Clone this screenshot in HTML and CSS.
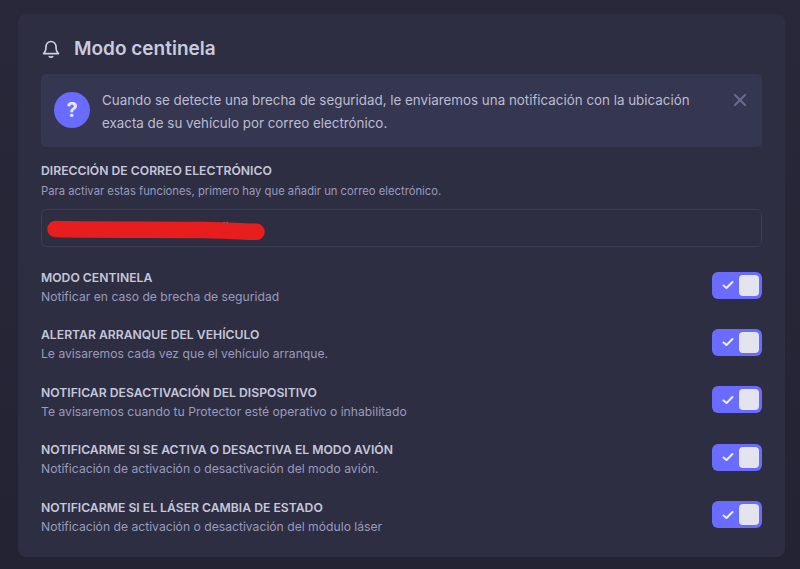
FILE: index.html
```html
<!DOCTYPE html>
<html lang="es">
<head>
<meta charset="utf-8">
<title>Modo centinela</title>
<link rel="stylesheet" href="styles.css">
</head>
<body>
<main class="card">
  <header class="head">
    <svg class="bell" width="20" height="20" viewBox="0 0 24 24" fill="none" stroke="currentColor" stroke-width="2" stroke-linecap="round" stroke-linejoin="round"><path d="M6 9a6 6 0 0 1 12 0c0 5 1.200 7 3 8.500H3C4.800 16 6 14 6 9z"/><path d="M10 21.200c.8.800 3.200.800 4 0"/></svg>
    <h1 class="title">Modo centinela</h1>
  </header>
  <section class="alert">
    <span class="alert-icon">?</span>
    <p class="alert-text">Cuando se detecte una brecha de seguridad, le enviaremos una notificación con la ubicación exacta de su vehículo por correo electrónico.</p>
    <svg class="close" width="14" height="14" viewBox="0 0 14 14" fill="none" stroke="currentColor" stroke-width="2" stroke-linecap="round"><path d="M2 2l10 10M12 2L2 12"/></svg>
  </section>
  <section class="email">
    <div class="label">DIRECCIÓN DE CORREO ELECTRÓNICO</div>
    <div class="hint">Para activar estas funciones, primero hay que añadir un correo electrónico.</div>
    <div class="field">
      <svg class="scribble" width="224" height="28" viewBox="0 0 224 28" fill="none"><circle cx="177" cy="5.500" r=".8" fill="#9a9bbd"/><circle cx="180" cy="5.500" r=".8" fill="#9a9bbd"/><path d="M8.500 12C60 13 120 12.500 155 13S195 14.800 209.500 14.800" stroke="#e81e1e" stroke-width="16.500" stroke-linecap="round"/></svg>
    </div>
  </section>
  <ul class="rows">
    <li class="row">
      <div><div class="label">MODO CENTINELA</div><div class="desc">Notificar en caso de brecha de seguridad</div></div>
      <span class="toggle"><svg width="12" height="10" viewBox="0 0 12 10" fill="none" stroke="currentColor" stroke-width="2" stroke-linecap="round" stroke-linejoin="round"><path d="M1.500 5.500L4.500 8l6-6"/></svg><i class="knob"></i></span>
    </li>
    <li class="row">
      <div><div class="label">ALERTAR ARRANQUE DEL VEHÍCULO</div><div class="desc">Le avisaremos cada vez que el vehículo arranque.</div></div>
      <span class="toggle"><svg width="12" height="10" viewBox="0 0 12 10" fill="none" stroke="currentColor" stroke-width="2" stroke-linecap="round" stroke-linejoin="round"><path d="M1.500 5.500L4.500 8l6-6"/></svg><i class="knob"></i></span>
    </li>
    <li class="row">
      <div><div class="label">NOTIFICAR DESACTIVACIÓN DEL DISPOSITIVO</div><div class="desc">Te avisaremos cuando tu Protector esté operativo o inhabilitado</div></div>
      <span class="toggle"><svg width="12" height="10" viewBox="0 0 12 10" fill="none" stroke="currentColor" stroke-width="2" stroke-linecap="round" stroke-linejoin="round"><path d="M1.500 5.500L4.500 8l6-6"/></svg><i class="knob"></i></span>
    </li>
    <li class="row">
      <div><div class="label">NOTIFICARME SI SE ACTIVA O DESACTIVA EL MODO AVIÓN</div><div class="desc">Notificación de activación o desactivación del modo avión.</div></div>
      <span class="toggle"><svg width="12" height="10" viewBox="0 0 12 10" fill="none" stroke="currentColor" stroke-width="2" stroke-linecap="round" stroke-linejoin="round"><path d="M1.500 5.500L4.500 8l6-6"/></svg><i class="knob"></i></span>
    </li>
    <li class="row">
      <div><div class="label">NOTIFICARME SI EL LÁSER CAMBIA DE ESTADO</div><div class="desc">Notificación de activación o desactivación del módulo láser</div></div>
      <span class="toggle"><svg width="12" height="10" viewBox="0 0 12 10" fill="none" stroke="currentColor" stroke-width="2" stroke-linecap="round" stroke-linejoin="round"><path d="M1.500 5.500L4.500 8l6-6"/></svg><i class="knob"></i></span>
    </li>
  </ul>
</main>
</body>
</html>
```
FILE: styles.css
```css
* { box-sizing: border-box; }
html, body { height: 100%; }
body {
  margin: 0;
  padding: 14px 15px 12px 18px;
  background: linear-gradient(#28283a, #232334);
  font-family: Inter, "Liberation Sans", sans-serif;
  overflow: hidden;
}
.card {
  height: 543px;
  background: #2d2e42;
  border-radius: 8px;
  padding: 23px 23px 0;
}
.head {
  display: flex;
  align-items: center;
  gap: 13px;
  height: 24px;
  color: #cfd0e2;
}
.bell { flex: none; }
.title {
  margin: 0;
  font-size: 19px;
  font-weight: 600;
  line-height: 24px;
  color: #c9cadd;
}
.alert {
  display: flex;
  align-items: flex-start;
  margin-top: 13px;
  height: 73px;
  padding: 18px 15px 0 13px;
  background: #35364f;
  border-radius: 5px;
}
.alert-icon {
  flex: none;
  width: 36px;
  height: 36px;
  border-radius: 50%;
  background: #696cff;
  color: #e7e7f5;
  font-size: 20px;
  font-weight: 700;
  line-height: 36px;
  text-align: center;
}
.alert-text {
  flex: 1;
  margin: -3px 30px 0 12px;
  font-size: 13.360px;
  line-height: 23px;
  color: #bcbdd3;
}
.close { flex: none; color: #6a6a96; margin-top: 1px; }
.email { margin-top: 16px; }
.label {
  font-size: 12.200px;
  font-weight: 600;
  line-height: 16px;
  color: #c6c7da;
}
.hint {
  margin-top: 4px;
  font-size: 11.250px;
  line-height: 16px;
  color: #9a9bbd;
}
.field {
  position: relative;
  height: 38px;
  margin-top: 10px;
  border: 1px solid #3a3b55;
  border-radius: 5px;
}
.scribble { position: absolute; left: 5px; top: 7px; }
.rows {
  list-style: none;
  margin: 23px 0 0;
  padding: 0;
  display: flex;
  flex-direction: column;
  gap: 20px;
}
.row {
  display: flex;
  justify-content: space-between;
  align-items: flex-start;
  height: 37.400px;
}
.desc {
  margin-top: 2px;
  font-size: 12.170px;
  line-height: 18px;
  color: #9a9bbd;
}
.toggle {
  display: flex;
  align-items: center;
  width: 50px;
  height: 27px;
  margin-top: 1.600px;
  padding: 0 3px 0 10px;
  border-radius: 6px;
  background: #696cff;
  color: #eeeefb;
  gap: 5px;
}
.toggle svg { flex: none; }
.knob {
  width: 20px;
  height: 21px;
  margin-left: auto;
  border-radius: 4px;
  background: #e4e4ee;
}
```
